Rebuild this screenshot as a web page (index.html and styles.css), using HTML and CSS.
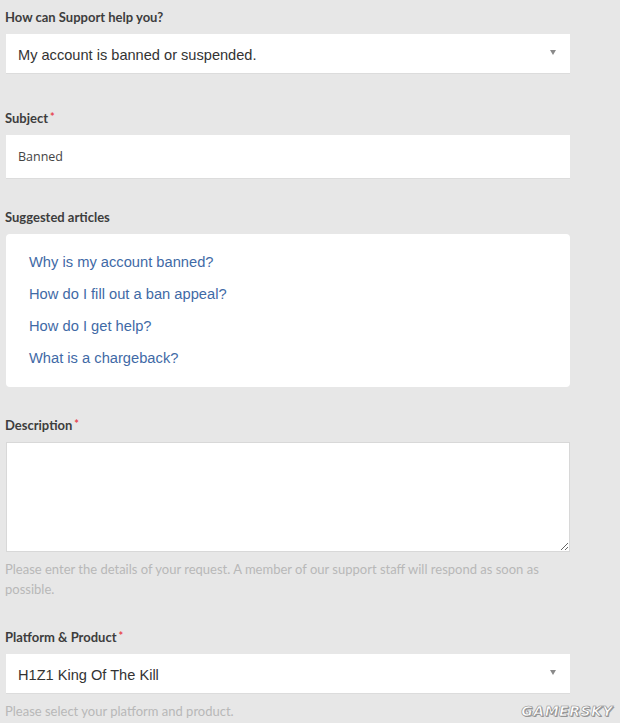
FILE: index.html
```html
<!DOCTYPE html>
<html>
<head>
<meta charset="utf-8">
<link rel="stylesheet" href="styles.css">
</head>
<body>
<div class="form">
  <div class="group g-first">
    <div class="label">How can Support help you?</div>
    <div class="select"><span>My account is banned or suspended.</span><i class="caret"></i></div>
  </div>
  <div class="group g-subject">
    <div class="label">Subject<span class="req">*</span></div>
    <div class="input">Banned</div>
  </div>
  <div class="group g-articles">
    <div class="label">Suggested articles</div>
    <div class="articles">
      <a class="article">Why is my account banned?</a>
      <a class="article">How do I fill out a ban appeal?</a>
      <a class="article">How do I get help?</a>
      <a class="article">What is a chargeback?</a>
    </div>
  </div>
  <div class="group g-desc">
    <div class="label">Description<span class="req">*</span></div>
    <textarea class="textarea"></textarea>
    <div class="help">Please enter the details of your request. A member of our support staff will respond as soon as possible.</div>
  </div>
  <div class="group g-platform">
    <div class="label">Platform &amp; Product<span class="req">*</span></div>
    <div class="select select-b"><span>H1Z1 King Of The Kill</span><i class="caret"></i></div>
    <div class="help">Please select your platform and product.</div>
  </div>
</div>
<div class="watermark">GAMERSKY</div>
</body>
</html>
```
FILE: styles.css
```css
html, body {
  margin: 0;
  padding: 0;
}
body {
  background: #e7e7e7;
  width: 620px;
  height: 723px;
  overflow: hidden;
  position: relative;
  font-family: "Lato", "Open Sans", sans-serif;
}
.form {
  padding: 7px 0 0 5px;
  width: 565px;
}
.group {
  display: flex;
  flex-direction: column;
}
.g-first { margin-bottom: 34px; }
.g-subject { margin-bottom: 28px; }
.g-articles { margin-bottom: 28px; }
.g-desc { margin-bottom: 28px; }
.label {
  font-size: 13px;
  font-weight: bold;
  color: #3d3d3d;
  line-height: 20px;
  height: 20px;
  margin-bottom: 7px;
}
.req {
  color: #e8454f;
  margin-left: 2px;
  font-size: 11px;
  vertical-align: top;
  position: relative;
  top: -1px;
}
.select {
  margin-left: 1px;
  height: 40px;
  box-sizing: border-box;
  background: #fff;
  border-bottom: 1px solid #dcdcdc;
  display: flex;
  align-items: center;
  justify-content: space-between;
  padding: 3px 14px 0 12px;
  font-family: "Liberation Sans", Arial, sans-serif;
  font-size: 14.6px;
  color: #333;
}
.select-b { height: 40px; }
.caret {
  width: 0;
  height: 0;
  border-left: 3px solid transparent;
  border-right: 3px solid transparent;
  border-top: 5px solid #8a8a8a;
  margin-top: -6px;
}
.input {
  margin-left: 1px;
  height: 44px;
  box-sizing: border-box;
  background: #fff;
  border-bottom: 1px solid #dcdcdc;
  display: flex;
  align-items: center;
  padding: 0 12px;
  font-family: "Open Sans", sans-serif;
  font-size: 12.5px;
  color: #444;
}
.articles {
  margin-left: 1px;
  background: #fff;
  border-radius: 4px;
  padding: 12px 23px 13px;
  height: 153px;
  box-sizing: border-box;
  display: flex;
  flex-direction: column;
}
.article {
  font-family: "Liberation Sans", Arial, sans-serif;
  font-size: 14.7px;
  line-height: 32px;
  color: #3f6aa6;
  text-decoration: none;
}
.textarea {
  margin: 0 0 0 1px;
  height: 110px;
  box-sizing: border-box;
  background: #fff;
  border: 1px solid #d8d8d8;
  border-radius: 0;
  resize: vertical;
  display: block;
  width: 564px;
}
.help {
  margin-top: 7px;
  font-size: 13px;
  line-height: 20px;
  color: #b8b8b8;
  padding-right: 10px;
}
.watermark {
  position: absolute;
  right: 7px;
  bottom: 4px;
  font-family: "DejaVu Sans", sans-serif;
  font-weight: bold;
  font-style: italic;
  font-size: 14px;
  letter-spacing: 0.5px;
  color: #fff;
  -webkit-text-stroke: 0.6px #8a8a8a;
  text-shadow: 1px 1px 0 #9a9a9a;
}
```
